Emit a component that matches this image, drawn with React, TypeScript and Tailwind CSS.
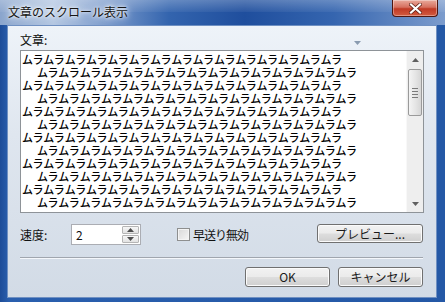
import * as React from 'react';

const PAIR = 'ムラ';
const LINES = Array.from({ length: 12 }, (_, i) => ({ indent: i % 2 === 1, text: PAIR.repeat(15) }));

function TitleBar() {
  return (
    <div className="relative h-[25px] shrink-0 bg-[linear-gradient(90deg,#8aa5cd_0%,#b4c7e2_12%,#86a3d0_22%,#3364ae_38%,#1f4e9d_55%,#3565af_75%,#7c9ccd_100%)]">
      <div className="absolute inset-x-0 top-0 h-[12px] bg-[linear-gradient(180deg,rgba(255,255,255,0.25),rgba(255,255,255,0.05))]" />
      <span className="absolute left-[8px] top-[4px] text-[12px] leading-[16px] text-[#161616] [text-shadow:0_0_6px_#ffffff,0_0_3px_#ffffff,0_0_10px_#dfe8f4]">
        文章のスクロール表示
      </span>
      <div className="absolute right-[7px] top-0 w-[46px] h-[17px] rounded-b-[4px] border border-t-0 border-[#4e1610] bg-[linear-gradient(180deg,#e9aa9c_0%,#d6705f_45%,#c03a25_55%,#d25b40_100%)] flex items-center justify-center shadow-[inset_0_0_0_1px_rgba(255,255,255,0.35)]">
        <svg width="13" height="11" viewBox="0 0 13 11">
          <path d="M2 1.5 L11 9.5 M11 1.5 L2 9.5" stroke="#5a1e14" strokeWidth="3.6" strokeLinecap="square" />
          <path d="M2 1.5 L11 9.5 M11 1.5 L2 9.5" stroke="#ffffff" strokeWidth="2.2" strokeLinecap="square" />
        </svg>
      </div>
    </div>
  );
}

function Arrow({ up, color = '#4d4d4d' }: { up?: boolean; color?: string }) {
  return (
    <svg width="7" height="4" viewBox="0 0 7 4">
      <path d={up ? 'M0 4 L3.5 0 L7 4 Z' : 'M0 0 L7 0 L3.5 4 Z'} fill={color} />
    </svg>
  );
}

function ScrollBar() {
  return (
    <div className="w-[17px] shrink-0 flex flex-col bg-[#eeeeee] border-l border-[#f8f8f8]">
      <div className="h-[17px] flex items-center justify-center">
        <Arrow up color="#606060" />
      </div>
      <div className="mt-[1px] mx-[1px] h-[47px] rounded-[2px] border border-[#9a9a9a] bg-[linear-gradient(90deg,#f4f4f4,#e6e6e6_50%,#d6d6d6)] flex flex-col items-center justify-center gap-[2px]">
        <div className="w-[6px] h-[1px] bg-[#7a7a7a]" />
        <div className="w-[6px] h-[1px] bg-[#7a7a7a]" />
        <div className="w-[6px] h-[1px] bg-[#7a7a7a]" />
        <div className="w-[6px] h-[1px] bg-[#7a7a7a]" />
      </div>
      <div className="flex-1" />
      <div className="h-[17px] flex items-center justify-center">
        <Arrow color="#606060" />
      </div>
    </div>
  );
}

function Button({ children, w }: { children: React.ReactNode; w: string }) {
  return (
    <div
      className={`${w} h-full rounded-[3px] border border-[#707070] bg-[linear-gradient(180deg,#f2f2f2_0%,#ebebeb_48%,#dddddd_52%,#cfcfcf_100%)] shadow-[inset_0_0_0_1px_#fbfbfb] flex items-center justify-center text-[12px] leading-none text-[#1a1a1a]`}
    >
      {children}
    </div>
  );
}

export default function App() {
  return (
    <div className="w-[445px] h-[302px] overflow-hidden flex flex-col bg-[linear-gradient(90deg,#1d4c98,#2a5fae_2%,#2458a6)] font-['Noto_Sans_CJK_JP',sans-serif] text-[12px] text-[#111]">
      <TitleBar />
      <div className="flex-1 ml-[7px] mr-[8px] mb-[4px] border border-[#6f90c2] bg-[linear-gradient(180deg,#eef3f9_0%,#dfe6ef_40%,#d2dbe6_100%)] px-[12px] pt-[7px] flex flex-col">
        {/* 文章 label row */}
        <div className="h-[17px] flex items-start justify-between">
          <span className="leading-[14px]">文章:</span>
          <div className="mr-[63px] mt-[8px]">
            <svg width="7" height="4" viewBox="0 0 7 4">
              <path d="M0 0 L7 0 L3.5 4 Z" fill="#8a9bb0" />
            </svg>
          </div>
        </div>

        {/* text area */}
        <div className="h-[163px] border border-[#8e9398] bg-white flex">
          <div className="flex-1 overflow-hidden pt-[2px] pl-[1px]">
            {LINES.map((l, i) => (
              <div
                key={i}
                className={`whitespace-pre leading-[13px] text-[11px] font-medium tracking-[0.1px] text-black ${l.indent ? 'pl-[15px]' : ''}`}
              >
                {l.text}
              </div>
            ))}
          </div>
          <ScrollBar />
        </div>

        {/* speed row */}
        <div className="mt-[11px] h-[21px] flex items-center">
          <span className="w-[51px]">速度:</span>
          <div className="w-[70px] h-[21px] border border-[#abadb3] bg-white flex items-center">
            <span className="flex-1 pl-[4px] leading-none">2</span>
            <div className="w-[17px] h-[17px] mr-[1px] flex flex-col gap-[1px]">
              <div className="flex-1 border border-[#b5b5b5] rounded-[1px] bg-[linear-gradient(180deg,#f7f7f7,#e2e2e2)] flex items-center justify-center">
                <Arrow up />
              </div>
              <div className="flex-1 border border-[#b5b5b5] rounded-[1px] bg-[linear-gradient(180deg,#f7f7f7,#e2e2e2)] flex items-center justify-center">
                <Arrow />
              </div>
            </div>
          </div>
          <div className="ml-[36px] w-[13px] h-[13px] border border-[#8e8f8f] bg-[linear-gradient(135deg,#d8d8d8,#f6f6f6)] shadow-[inset_0_0_0_1px_#f4f4f4]" />
          <span className="ml-[3px] tracking-[-1px]">早送り無効</span>
          <div className="ml-auto mr-[1px] h-[19px] self-start">
            <Button w="w-[106px]">プレビュー...</Button>
          </div>
        </div>

        {/* separator */}
        <div className="mt-[12px] mr-[1px] h-[2px] border-t border-[#a0a6ae] border-b border-b-[#f4f7fb]" />

        {/* buttons */}
        <div className="mt-[8px] mr-[1px] h-[20px] flex justify-end gap-[8px]">
          <Button w="w-[85px]">OK</Button>
          <Button w="w-[85px]">キャンセル</Button>
        </div>
      </div>
    </div>
  );
}
